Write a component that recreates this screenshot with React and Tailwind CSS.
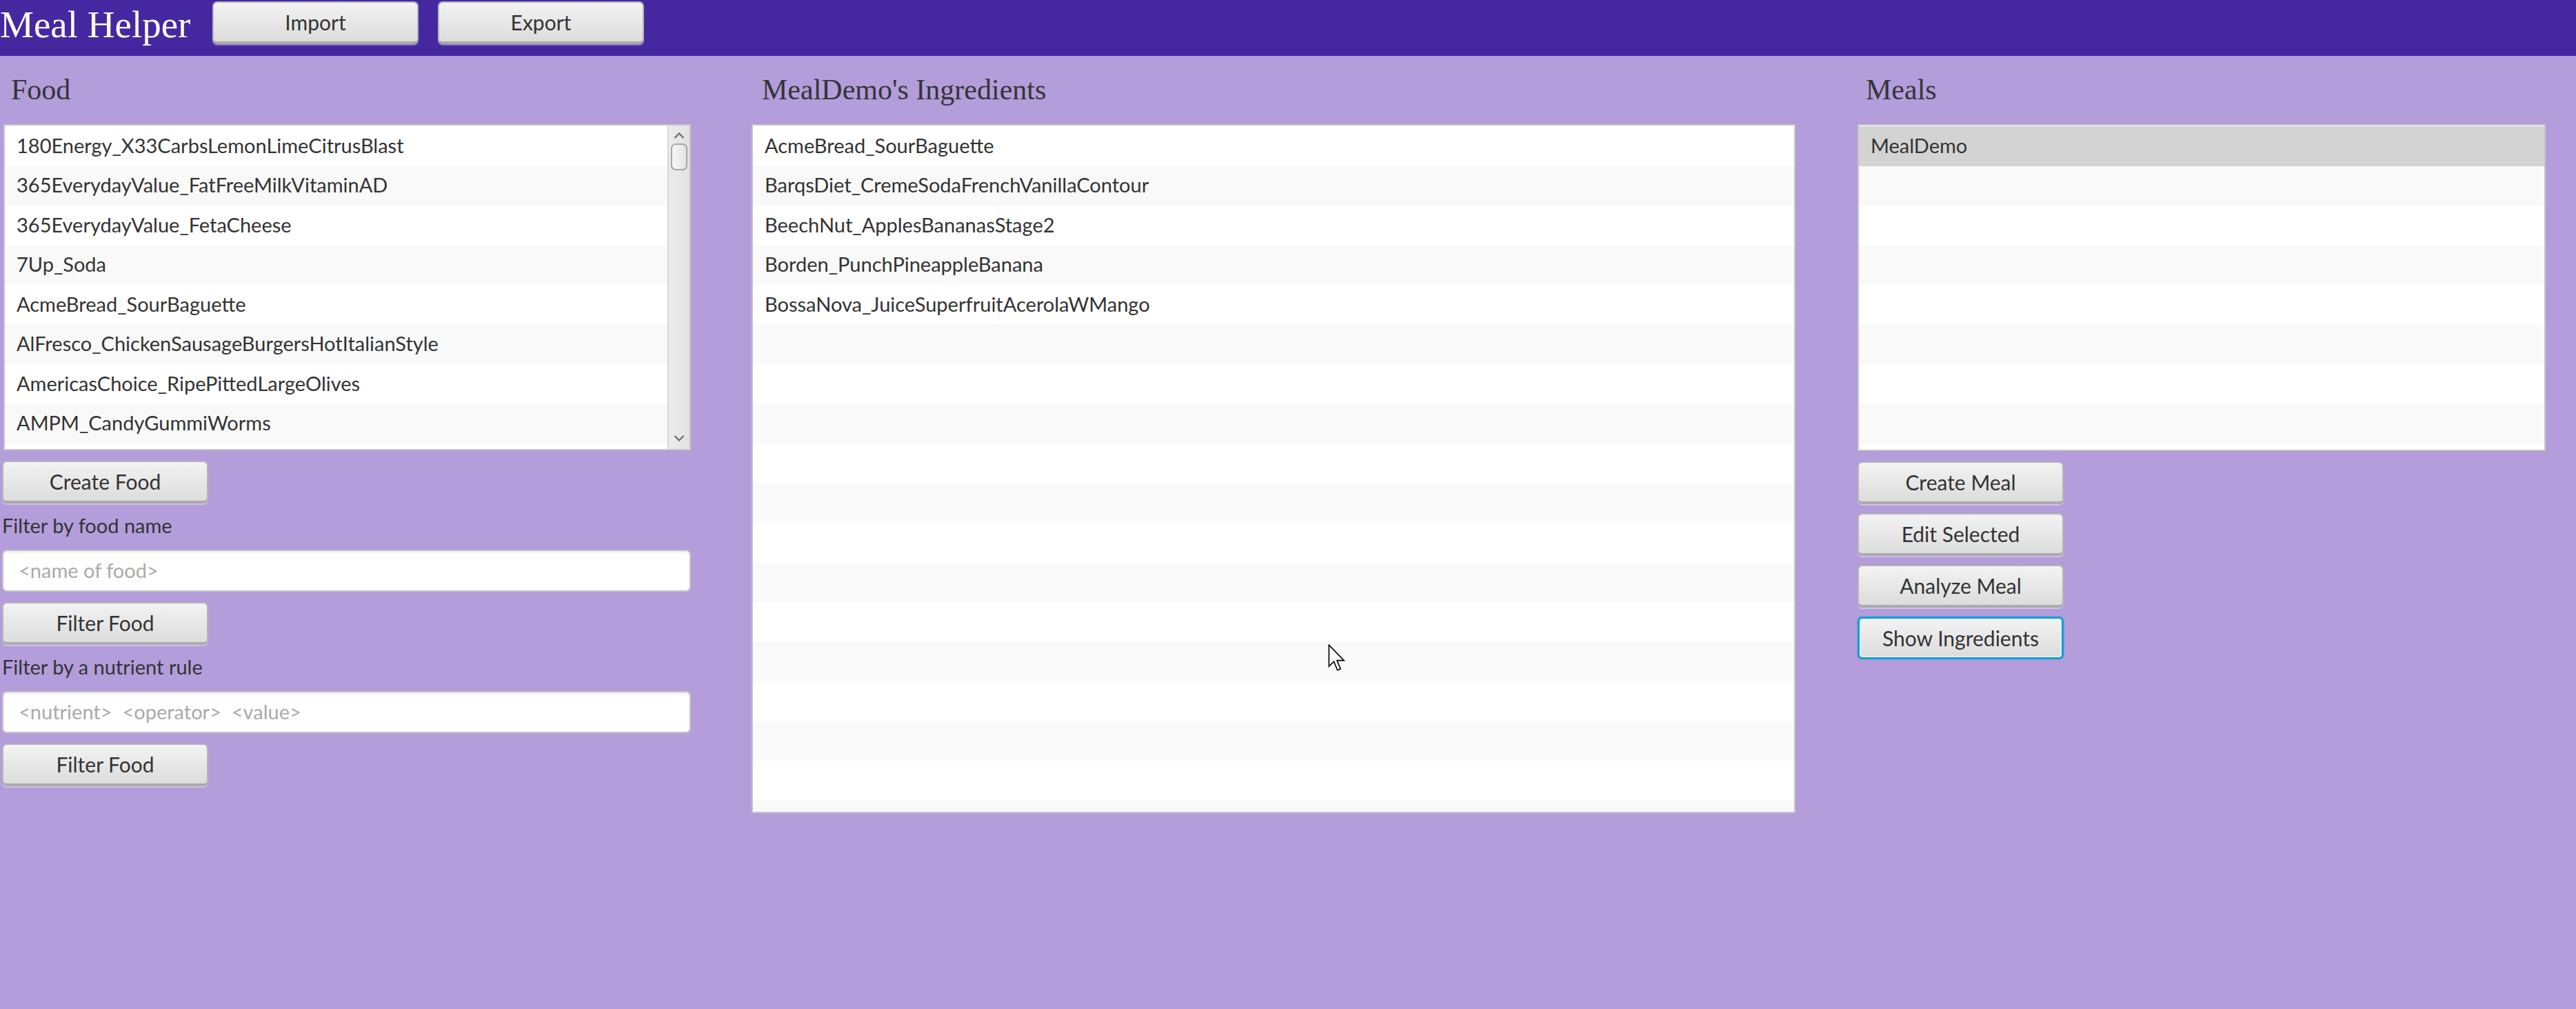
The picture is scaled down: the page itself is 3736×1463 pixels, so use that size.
import React from 'react';

const foods = [
  '180Energy_X33CarbsLemonLimeCitrusBlast',
  '365EverydayValue_FatFreeMilkVitaminAD',
  '365EverydayValue_FetaCheese',
  '7Up_Soda',
  'AcmeBread_SourBaguette',
  'AlFresco_ChickenSausageBurgersHotItalianStyle',
  'AmericasChoice_RipePittedLargeOlives',
  'AMPM_CandyGummiWorms',
  '',
];

const ingredients = [
  'AcmeBread_SourBaguette',
  'BarqsDiet_CremeSodaFrenchVanillaContour',
  'BeechNut_ApplesBananasStage2',
  'Borden_PunchPineappleBanana',
  'BossaNova_JuiceSuperfruitAcerolaWMango',
];

function Row({ text, index, selected }) {
  const bg = selected ? 'bg-[#d3d3d3]' : index % 2 === 1 ? 'bg-[#f9f9f9]' : 'bg-white';
  return (
    <div className={`h-[57.5px] shrink-0 flex items-center pl-[17px] pb-[3px] whitespace-nowrap ${bg}`}>
      {text}
    </div>
  );
}

function FxButton({ children, focused }) {
  return (
    <button
      className={
        'w-[299px] h-[62px] shrink-0 rounded-[7px] bg-gradient-to-b from-[#f3f3f3] to-[#dcdcdc] text-[30px] text-[#333333] ' +
        (focused
          ? 'border-[3px] border-[#0a9fd8] shadow-[inset_0_0_0_2px_#e6eef2,0_0_2px_rgba(10,159,216,0.5)]'
          : 'border-2 border-[#b5b5b5] border-b-[4px] border-b-[#ababab] shadow-[0_2px_0_rgba(255,255,255,0.35)]')
      }
    >
      {children}
    </button>
  );
}

function Heading({ children, pl }) {
  return (
    <div className={`h-[99px] pt-[27px] leading-[44px] text-[42px] text-[#353535] font-['Liberation_Serif',serif] ${pl}`}>
      {children}
    </div>
  );
}

function FxInput({ placeholder }) {
  return (
    <div className="w-[999px] h-[61px] rounded-[7px] border-2 border-[#c4c4c4] bg-white shadow-[inset_0_3px_3px_rgba(0,0,0,0.06)] flex items-center pl-[22px] pb-[2px] text-[29px] text-[#aaaaaa] whitespace-pre">
      {placeholder}
    </div>
  );
}

function Chevron({ up }) {
  return (
    <svg width="16" height="9" viewBox="0 0 16 9" className="text-[#6f6f6f]">
      <path
        d={up ? 'M1.5 8 L8 1.5 L14.5 8' : 'M1.5 1 L8 7.5 L14.5 1'}
        fill="none"
        stroke="currentColor"
        strokeWidth="2.4"
      />
    </svg>
  );
}

export default function App() {
  return (
    <div className="relative w-[3736px] h-[1463px] overflow-hidden bg-[#b39ddb] font-['Lato',sans-serif] text-[29px] text-[#333333]">
      {/* top bar */}
      <div className="h-[81px] bg-[#4527a0] flex items-start">
        <div className="w-[308px] shrink-0 text-white text-[55px] leading-[72px] font-['Liberation_Serif',serif] whitespace-nowrap">
          Meal Helper
        </div>
        <div className="flex gap-[28px] pt-[2px]">
          <FxButton>Import</FxButton>
          <FxButton>Export</FxButton>
        </div>
      </div>

      <div className="flex pl-[3px]">
        {/* Food column */}
        <div className="w-[1000px] shrink-0 flex flex-col">
          <Heading pl="pl-[13px]">Food</Heading>
          <div className="ml-[2px] w-[997px] h-[473px] border-2 border-[#c6c6c6] bg-white flex overflow-hidden">
            <div className="flex-1 flex flex-col pt-[1px] overflow-hidden">
              {foods.map((f, i) => (
                <Row key={i} text={f} index={i} />
              ))}
            </div>
            <div className="w-[32px] shrink-0 border-l-2 border-[#d6d6d6] bg-gradient-to-r from-[#ececec] to-[#e2e2e2] flex flex-col items-center">
              <div className="h-[24px] flex items-center justify-center pt-[4px]">
                <Chevron up />
              </div>
              <div className="mt-[2px] w-[24px] h-[39px] rounded-[7px] border-2 border-[#a6a6a6] bg-gradient-to-r from-[#f7f7f7] to-[#e3e3e3]" />
              <div className="flex-1" />
              <div className="h-[26px] flex items-center justify-center pb-[6px]">
                <Chevron />
              </div>
            </div>
          </div>
          <div className="mt-[15px]">
            <FxButton>Create Food</FxButton>
          </div>
          <div className="mt-[15px] leading-[34px] mb-[18px]">Filter by food name</div>
          <FxInput placeholder="<name of food>" />
          <div className="mt-[15px]">
            <FxButton>Filter Food</FxButton>
          </div>
          <div className="mt-[15px] leading-[34px] mb-[18px]">Filter by a nutrient rule</div>
          <FxInput placeholder="<nutrient>  <operator>  <value>" />
          <div className="mt-[15px]">
            <FxButton>Filter Food</FxButton>
          </div>
        </div>

        {/* Ingredients column */}
        <div className="w-[1514px] ml-[87px] shrink-0 flex flex-col">
          <Heading pl="pl-[15px]">MealDemo's Ingredients</Heading>
          <div className="h-[999px] border-2 border-[#c6c6c6] bg-white flex flex-col pt-[1px] overflow-hidden">
            {Array.from({ length: 18 }).map((_, i) => (
              <Row key={i} text={ingredients[i] || ''} index={i} />
            ))}
          </div>
        </div>

        {/* Meals column */}
        <div className="w-[998px] ml-[90px] shrink-0 flex flex-col">
          <Heading pl="pl-[12px]">Meals</Heading>
          <div className="h-[474px] border-2 border-[#c6c6c6] bg-white flex flex-col pt-[1px] overflow-hidden">
            {Array.from({ length: 9 }).map((_, i) => (
              <Row key={i} text={i === 0 ? 'MealDemo' : ''} index={i} selected={i === 0} />
            ))}
          </div>
          <div className="mt-[15px] flex flex-col gap-[13px]">
            <FxButton>Create Meal</FxButton>
            <FxButton>Edit Selected</FxButton>
            <FxButton>Analyze Meal</FxButton>
            <FxButton focused>Show Ingredients</FxButton>
          </div>
        </div>
      </div>

      {/* mouse pointer */}
      <svg
        className="absolute left-[1926px] top-[934px]"
        width="27"
        height="40"
        viewBox="0 0 13 19.5"
      >
        <path
          d="M0.6 0.6 L0.6 15.6 L4.1 12.3 L6.6 18.4 L8.8 17.5 L6.3 11.5 L11.2 11.5 Z"
          fill="white"
          stroke="black"
          strokeWidth="0.8"
          strokeLinejoin="miter"
        />
      </svg>
    </div>
  );
}
